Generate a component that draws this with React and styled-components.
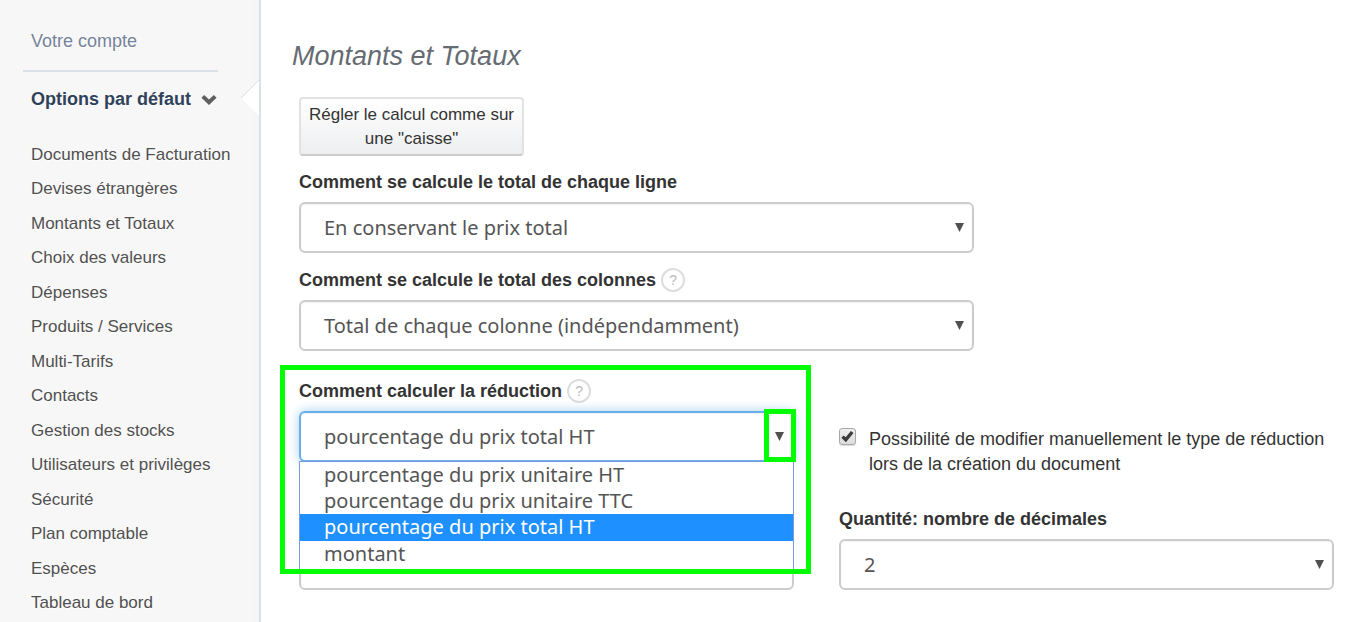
import React from "react";
import styled, { createGlobalStyle, css } from "styled-components";

const GlobalStyle = createGlobalStyle`
  *, *::before, *::after { box-sizing: border-box; }
  body {
    margin: 0;
    background: #fff;
    color: #333;
    font-family: "Liberation Sans", Arial, sans-serif;
    font-size: 18px;
  }
`;

const Page = styled.div`
  display: flex;
  min-height: 100vh;
`;

const Sidebar = styled.nav`
  position: relative;
  flex: 0 0 261px;
  padding: 29px 0 0 23px;
  background: linear-gradient(to left, #f3f4f5, #f7f7f7 8px);
  border-right: 2px solid #d9e0e8;
  text-shadow: 0 1px 0 #fff;
`;

const AccountLink = styled.a`
  display: block;
  width: 195px;
  padding: 0 8px 16px;
  border-bottom: 2px solid #d9e0e8;
  color: #75829b;
  line-height: 25px;
  text-decoration: none;
`;

const SectionLink = styled.a`
  display: flex;
  align-items: center;
  gap: 10px;
  padding: 14px 8px;
  color: #2f4259;
  font-weight: bold;
  line-height: 26px;
  text-decoration: none;
`;

const Notch = styled.svg`
  position: absolute;
  top: 80px;
  right: 0;
`;

const MenuList = styled.ul`
  margin: 12px 0 0;
  padding: 0 0 0 8px;
  list-style: none;
`;

const MenuItem = styled.li`
  font-size: 17px;
  line-height: 34px;
  white-space: nowrap;

  &:nth-child(even) { margin-bottom: 1px; }
`;

const MenuLink = styled.a`
  color: #505050;
  text-decoration: none;
`;

const Main = styled.main`
  flex: 1;
  min-width: 0;
  padding: 40px 13px 32px 38px;
`;

const Title = styled.h1`
  margin: 0 0 25px -7px;
  color: #666b72;
  font-size: 27px;
  font-style: italic;
  font-weight: normal;
  line-height: 32px;
`;

const PresetButton = styled.button`
  display: block;
  width: 225px;
  margin-bottom: 14px;
  padding: 4px 8px 3px;
  border: 2px solid #e2e2e2;
  border-bottom-color: #ccc;
  border-radius: 4px;
  background: linear-gradient(#fff, #edeef0);
  color: #333;
  font-family: inherit;
  font-size: 17px;
  line-height: 24px;
`;

const Row = styled.div`
  display: grid;
  grid-template-columns: repeat(12, minmax(0, 1fr));
  align-items: start;
  column-gap: 45px;
  margin-bottom: ${(p) => p.$gap}px;
`;

const Field = styled.div`
  position: relative;
  align-self: ${(p) => (p.$bottom ? "end" : "start")};
  grid-column: span ${(p) => p.$span};
`;

const LabelLine = styled.div`
  display: flex;
  align-items: center;
  gap: 5px;
  margin-bottom: 8px;
  font-weight: bold;
  line-height: 24px;
`;

const HelpButton = styled.button`
  width: 24px;
  height: 24px;
  padding: 0;
  border: 2px solid #ddd;
  border-radius: 50%;
  background: #fff;
  color: #bbb;
  font-family: inherit;
  font-size: 14px;
  line-height: 20px;
`;

const control = css`
  display: block;
  width: 100%;
  height: 51px;
  padding: 0 23px;
  border: 2px solid #ccc;
  border-radius: 6px;
  background: #fff;
  box-shadow: inset 0 1px 2px rgba(0, 0, 0, 0.06);
  color: #555;
  font-family: "Noto Sans", sans-serif;
  font-size: 20px;
`;

const SelectWrap = styled.div`
  position: relative;
`;

const Select = styled.select`
  ${control}
  appearance: none;
  outline: none;
  ${(p) =>
    p.$focused &&
    css`
      border-color: #66afe9;
      box-shadow: inset 0 1px 2px rgba(0, 0, 0, 0.06), 0 0 11px rgba(102, 175, 233, 0.6);
    `}
`;

const TextInput = styled.input`
  ${control}
`;

const Caret = styled.svg`
  position: absolute;
  top: 21px;
  right: 10px;
  pointer-events: none;
`;

const OptionList = styled.ul`
  position: absolute;
  z-index: 2;
  top: calc(100% - 1px);
  left: 0;
  right: 0;
  margin: 0;
  padding: 0 0 4px;
  border: 1px solid #7a9be0;
  background: #fff;
  color: #555;
  font-family: "Noto Sans", sans-serif;
  font-size: 20px;
  line-height: 26px;
  list-style: none;
`;

const Option = styled.li`
  padding: 0 24px;
  ${(p) =>
    p.$active &&
    css`
      padding-bottom: 1px;
      background: #1e90ff;
      color: #fff;
    `}
`;

const FieldHighlight = styled.div`
  position: absolute;
  z-index: 3;
  inset: -14px -17px -112px -19px;
  border: 5px solid #0f0;
  pointer-events: none;
`;

const CaretHighlight = styled.div`
  position: absolute;
  z-index: 3;
  top: -2px;
  right: -2px;
  bottom: 0;
  width: 32px;
  border: 5px solid #0f0;
  pointer-events: none;
`;

const CheckLine = styled.label`
  display: flex;
  align-items: flex-start;
  gap: 13px;
  grid-column: span 6;
  padding-top: 48px;
  line-height: 25px;
`;

const CheckMark = styled.span`
  position: relative;
  flex: none;
  width: 17px;
  height: 17px;
  margin-top: 1px;

  svg {
    position: absolute;
    inset: 0;
    pointer-events: none;
  }
`;

const Checkbox = styled.input`
  appearance: none;
  display: block;
  width: 17px;
  height: 17px;
  margin: 0;
  border: 1px solid #a9a9a9;
  border-radius: 3px;
  background: linear-gradient(#eee, #dcdcdc);
  box-shadow: 0 1px 1px rgba(0, 0, 0, 0.15);
`;

const menu = [
  "Documents de Facturation",
  "Devises étrangères",
  "Montants et Totaux",
  "Choix des valeurs",
  "Dépenses",
  "Produits / Services",
  "Multi-Tarifs",
  "Contacts",
  "Gestion des stocks",
  "Utilisateurs et privilèges",
  "Sécurité",
  "Plan comptable",
  "Espèces",
  "Tableau de bord",
];

const reductions = [
  "pourcentage du prix unitaire HT",
  "pourcentage du prix unitaire TTC",
  "pourcentage du prix total HT",
  "montant",
];

function SelectField({ id, label, span, options, value, help, focused, children }) {
  return (
    <Field $span={span}>
      <LabelLine>
        <label htmlFor={id}>{label}</label>
        {help && <HelpButton type="button" aria-label="Aide">?</HelpButton>}
      </LabelLine>
      <SelectWrap>
        <Select id={id} defaultValue={value} $focused={focused}>
          {options.map((o) => (
            <option key={o}>{o}</option>
          ))}
        </Select>
        <Caret width="9" height="9" viewBox="0 0 9 9" aria-hidden="true">
          <path d="M0 0H9L4.5 9Z" fill="#505050" />
        </Caret>
        {focused && <CaretHighlight />}
      </SelectWrap>
      {children}
    </Field>
  );
}

export default function App() {
  return (
    <>
      <GlobalStyle />
      <Page>
        <Sidebar>
          <AccountLink href="#compte">Votre compte</AccountLink>
          <SectionLink href="#options">
            Options par défaut
            <svg width="16" height="11" viewBox="0 0 16 11" aria-hidden="true">
              <path d="M1.8 2.4L8 8.2L14.2 2.4" fill="none" stroke="#5f5f5f" strokeWidth="4" />
            </svg>
          </SectionLink>
          <Notch width="18" height="36" viewBox="0 0 18 36" aria-hidden="true">
            <path d="M18 0L0 18L18 36Z" fill="#fff" />
            <path d="M18 0L0 18" stroke="#d9e0e8" fill="none" />
          </Notch>
          <MenuList>
            {menu.map((m) => (
              <MenuItem key={m}>
                <MenuLink href="#section">{m}</MenuLink>
              </MenuItem>
            ))}
          </MenuList>
        </Sidebar>
        <Main>
          <Title>Montants et Totaux</Title>
          <PresetButton type="button">Régler le calcul comme sur une "caisse"</PresetButton>
          <Row $gap={15}>
            <SelectField
              id="total-ligne"
              span={8}
              label="Comment se calcule le total de chaque ligne"
              options={["En conservant le prix total"]}
            />
          </Row>
          <Row $gap={28}>
            <SelectField
              id="total-colonnes"
              span={8}
              help
              label="Comment se calcule le total des colonnes"
              options={["Total de chaque colonne (indépendamment)"]}
            />
          </Row>
          <Row $gap={30}>
            <SelectField
              id="reduction"
              span={6}
              help
              focused
              label="Comment calculer la réduction"
              options={reductions}
              value={reductions[2]}
            >
              <OptionList role="listbox" aria-label="Comment calculer la réduction">
                {reductions.map((r, i) => (
                  <Option key={r} role="option" aria-selected={i === 2} $active={i === 2}>
                    {r}
                  </Option>
                ))}
              </OptionList>
              <FieldHighlight />
            </SelectField>
            <CheckLine>
              <CheckMark>
                <Checkbox type="checkbox" defaultChecked />
                <svg width="17" height="17" viewBox="0 0 17 17" aria-hidden="true">
                  <path d="M3.5 8.6L6.8 11.8L13.2 4" fill="none" stroke="#3c3c3c" strokeWidth="3.4" />
                </svg>
              </CheckMark>
              <span>
                Possibilité de modifier manuellement le type de réduction lors de la création du
                document
              </span>
            </CheckLine>
          </Row>
          <Row $gap={0}>
            <Field $span={6} $bottom>
              <TextInput type="text" aria-label="Valeur" />
            </Field>
            <SelectField
              id="decimales"
              span={6}
              label="Quantité: nombre de décimales"
              options={["2"]}
            />
          </Row>
        </Main>
      </Page>
    </>
  );
}
